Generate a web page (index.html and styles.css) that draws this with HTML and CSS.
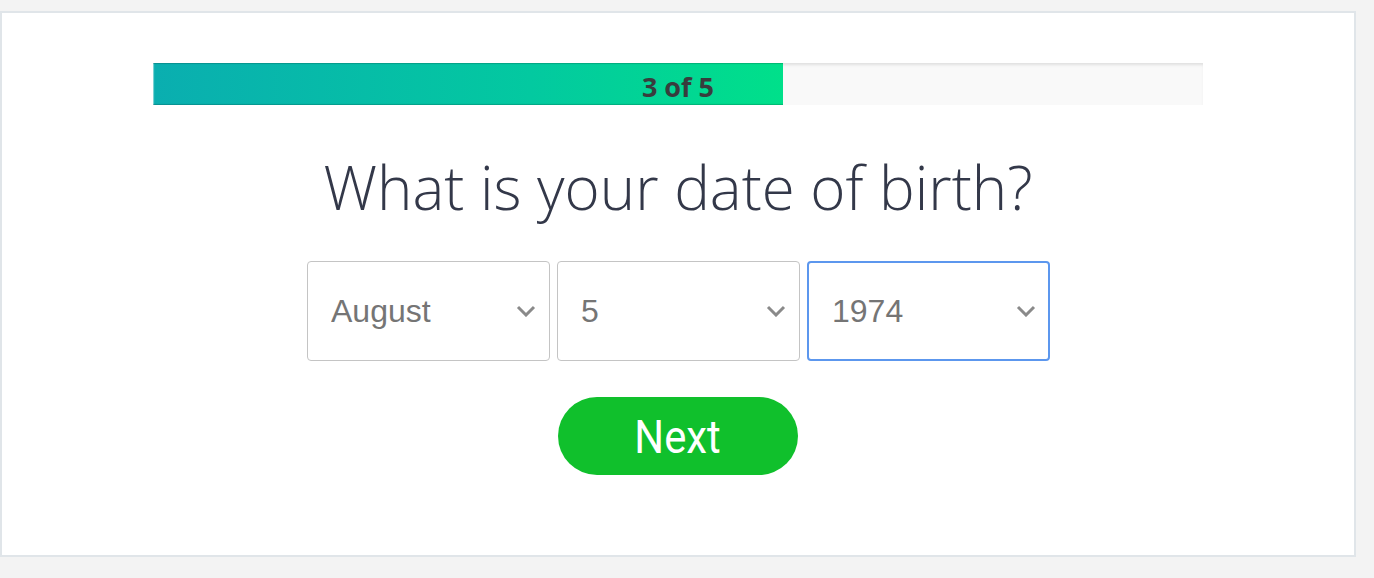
FILE: index.html
```html
<!DOCTYPE html>
<html lang="en">
<head>
<meta charset="utf-8">
<title>Date of birth</title>
<link rel="stylesheet" href="styles.css">
</head>
<body>
<div class="card">
  <div class="progress">
    <div class="progress-fill" style="width: 60%;"><span class="progress-label">3 of 5</span></div>
  </div>
  <h1 class="question">What is your date of birth?</h1>
  <div class="dob">
    <div class="select-wrap">
      <select class="select"><option>August</option></select>
      <svg class="chevron" viewBox="0 0 20 12" width="20" height="12"><path d="M2 2 L10 10 L18 2" fill="none" stroke="#8a8a8a" stroke-width="3"/></svg>
    </div>
    <div class="select-wrap">
      <select class="select"><option>5</option></select>
      <svg class="chevron" viewBox="0 0 20 12" width="20" height="12"><path d="M2 2 L10 10 L18 2" fill="none" stroke="#8a8a8a" stroke-width="3"/></svg>
    </div>
    <div class="select-wrap focused">
      <select class="select"><option>1974</option></select>
      <svg class="chevron" viewBox="0 0 20 12" width="20" height="12"><path d="M2 2 L10 10 L18 2" fill="none" stroke="#8a8a8a" stroke-width="3"/></svg>
    </div>
  </div>
  <div class="actions">
    <button class="next"><span class="next-label">Next</span></button>
  </div>
</div>
</body>
</html>
```
FILE: styles.css
```css
html, body {
  margin: 0;
  padding: 0;
  background: #f3f3f3;
}
body {
  padding-top: 11px;
}
.card {
  box-sizing: border-box;
  width: 1356px;
  height: 546px;
  background: #fff;
  border: 2px solid #e0e5e9;
  display: flex;
  flex-direction: column;
  align-items: center;
  padding-top: 50px;
}
.progress {
  width: 1050px;
  height: 42px;
  background: #f9f9f9;
  box-shadow: inset 0 3px 3px -1px rgba(0,0,0,0.10);
  display: flex;
}
.progress-fill {
  height: 100%;
  background: linear-gradient(to right, #0aaeb0 0%, #03c9a0 60%, #00e08a 100%);
  box-shadow: inset 0 2px 1px -1px rgba(0,0,0,0.18), inset 0 -2px 1px -1px rgba(0,0,0,0.18), inset 2px 0 1px -1px rgba(255,255,255,0.5);
  display: flex;
  align-items: center;
  justify-content: flex-end;
  box-sizing: border-box;
  padding-right: 69px;
}
.progress-label {
  font-family: "Open Sans", sans-serif;
  font-weight: 700;
  font-size: 27px;
  line-height: 1;
  color: #383d3d;
  padding-top: 5px;
}
.question {
  margin: 42px 0 0 0;
  font-family: "Open Sans", sans-serif;
  font-weight: 300;
  font-size: 60px;
  line-height: 80px;
  color: #333849;
  text-align: center;
}
.dob {
  margin-top: 34px;
  display: flex;
  gap: 7px;
  padding-left: 1px;
}
.select-wrap {
  position: relative;
  width: 243px;
  height: 100px;
}
.select {
  appearance: none;
  -webkit-appearance: none;
  box-sizing: border-box;
  width: 100%;
  height: 100%;
  border: 1px solid #c4c4c4;
  border-radius: 4px;
  background: #fff;
  padding: 0 0 0 23px;
  font-family: "Liberation Sans", Arial, sans-serif;
  font-size: 32px;
  color: #757575;
  outline: none;
}
.focused .select {
  border: 2px solid #5c97ee;
  padding-left: 23px;
}
.chevron {
  position: absolute;
  right: 14px;
  top: 44px;
  pointer-events: none;
}
.actions {
  margin-top: 36px;
}
.next {
  width: 240px;
  height: 78px;
  border: none;
  border-radius: 39px;
  background: #10c02c;
  color: #fff;
  cursor: pointer;
  padding: 0;
}
.next-label {
  display: inline-block;
  font-family: Roboto, sans-serif;
  font-weight: 400;
  font-size: 47px;
  transform: scaleX(0.89);
  line-height: 1;
}
```
